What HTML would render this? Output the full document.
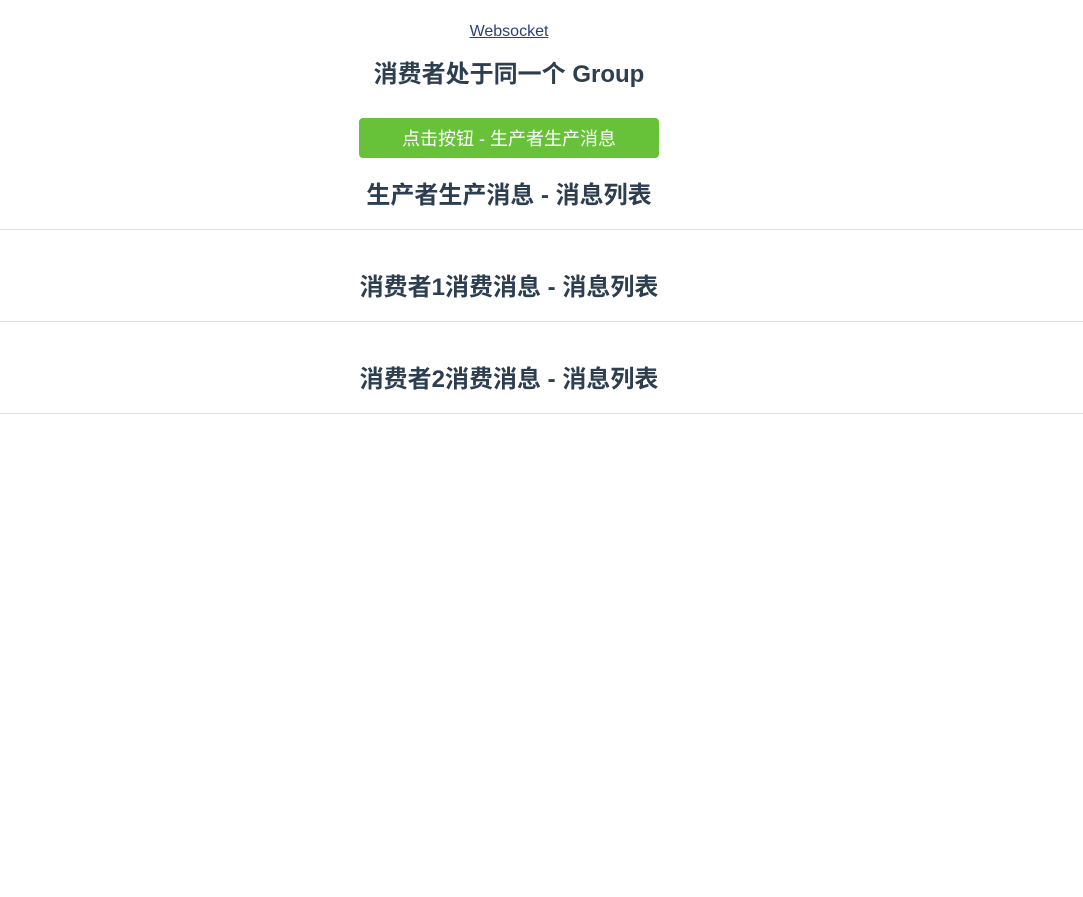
<!DOCTYPE html>
<html><head><meta charset="utf-8"><style>
body{margin:0;width:1083px;height:897px;background:#fff;font-family:"Liberation Sans","Noto Sans CJK SC",sans-serif;color:#2c3e50;position:relative;overflow:hidden}
.c{position:absolute;left:0;width:1018px;text-align:center}
a{font-size:16px;text-decoration:underline;color:#2c3e7a}
.btn{position:absolute;left:359px;top:118px;width:300px;height:40px;background:#67c23a;border-radius:4px;color:#fff;font-size:18px;line-height:42px;text-align:center}
.hr{position:absolute;left:0;width:1083px;height:1px;background:#dcdfe6}
.h{font-size:24px;font-weight:bold;line-height:30px}
</style></head><body>
<div class="c" style="top:23px;font-size:16px"><a>Websocket</a></div>
<div class="c h" style="top:60px">消费者处于同一个 Group</div>
<div class="btn">点击按钮 - 生产者生产消息</div>
<div class="c h" style="top:181px">生产者生产消息 - 消息列表</div>
<div class="hr" style="top:229px"></div>
<div class="c h" style="top:273px">消费者1消费消息 - 消息列表</div>
<div class="hr" style="top:321px"></div>
<div class="c h" style="top:365px">消费者2消费消息 - 消息列表</div>
<div class="hr" style="top:413px"></div>
</body></html>
